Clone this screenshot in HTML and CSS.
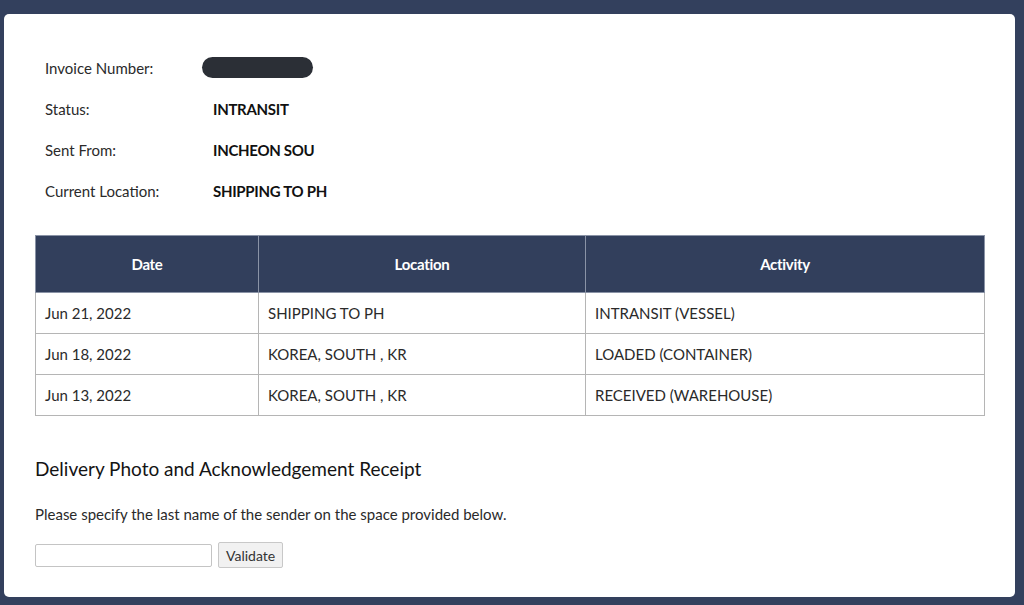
FILE: index.html
```html
<!DOCTYPE html>
<html lang="en">
<head>
    <meta charset="UTF-8">
    <meta name="viewport" content="width=device-width, initial-scale=1.0">
    <title>Track Shipment</title>
    <link rel="stylesheet" href="styles.css">
</head>
<body>
    <div class="card">
        <div class="summary">
            <div class="summary-row">
                <span class="summary-label">Invoice Number:</span>
                <span class="redacted"></span>
            </div>
            <div class="summary-row">
                <span class="summary-label">Status:</span>
                <span class="summary-value">INTRANSIT</span>
            </div>
            <div class="summary-row">
                <span class="summary-label">Sent From:</span>
                <span class="summary-value">INCHEON SOU</span>
            </div>
            <div class="summary-row">
                <span class="summary-label">Current Location:</span>
                <span class="summary-value">SHIPPING TO PH</span>
            </div>
        </div>

        <table class="history">
            <thead>
                <tr>
                    <th class="col-date">Date</th>
                    <th class="col-location">Location</th>
                    <th>Activity</th>
                </tr>
            </thead>
            <tbody>
                <tr>
                    <td>Jun 21, 2022</td>
                    <td>SHIPPING TO PH</td>
                    <td>INTRANSIT (VESSEL)</td>
                </tr>
                <tr>
                    <td>Jun 18, 2022</td>
                    <td>KOREA, SOUTH , KR</td>
                    <td>LOADED (CONTAINER)</td>
                </tr>
                <tr>
                    <td>Jun 13, 2022</td>
                    <td>KOREA, SOUTH , KR</td>
                    <td>RECEIVED (WAREHOUSE)</td>
                </tr>
            </tbody>
        </table>

        <h2>Delivery Photo and Acknowledgement Receipt</h2>
        <p class="hint">Please specify the last name of the sender on the space provided below.</p>
        <div class="validate-form">
            <input type="text" id="sender-name">
            <button id="validate-button">Validate</button>
        </div>
    </div>
</body>
</html>
```

FILE: styles.css
```css
body {
    font-family: "Lato", "Liberation Sans", sans-serif;
    background-color: #33405d;
    margin: 0;
    padding: 14px 9px 8px 4px;
    color: #1c1c1c;
}

.card {
    background-color: #fff;
    border-radius: 5px;
    height: 583px;
    box-sizing: border-box;
    padding: 33px 31px 0 31px;
}

.summary {
    padding-left: 10px;
    margin-bottom: 24px;
}

.summary-row {
    display: flex;
    align-items: center;
    height: 41px;
    font-size: 15px;
}

.summary-label {
    width: 168px;
    color: #2a2a2a;
}

.summary-value {
    font-weight: bold;
    letter-spacing: -0.3px;
    color: #111;
}

.redacted {
    display: inline-block;
    width: 111px;
    height: 21px;
    margin-left: -11px;
    border-radius: 11px;
    background-color: #2b2f36;
}

.history {
    width: 950px;
    border-collapse: collapse;
    font-size: 15px;
}

.history th {
    background-color: #323f5c;
    color: #fff;
    font-weight: bold;
    height: 54px;
    letter-spacing: -0.3px;
    border: 1px solid #8a93a6;
}

.col-date {
    width: 220px;
}

.col-location {
    width: 324px;
}

.history td {
    height: 40px;
    padding: 0 0 0 9px;
    border: 1px solid #b5b5b5;
    color: #2a2a2a;
}

h2 {
    font-size: 19px;
    font-weight: normal;
    margin: 41px 0 0 0;
    color: #141414;
}

.hint {
    font-size: 15px;
    margin: 25px 0 0 0;
    color: #2a2a2a;
}

.validate-form {
    display: flex;
    align-items: center;
    margin-top: 19px;
}

.validate-form input {
    width: 177px;
    height: 23px;
    box-sizing: border-box;
    border: 1px solid #c4c4c4;
    border-radius: 2px;
    margin: 0 6px 0 0;
}

.validate-form button {
    font-family: inherit;
    font-size: 14px;
    height: 26px;
    padding: 0 7px;
    background-color: #f1f1f1;
    border: 1px solid #c8c8c8;
    border-radius: 2px;
    color: #333;
}
```
